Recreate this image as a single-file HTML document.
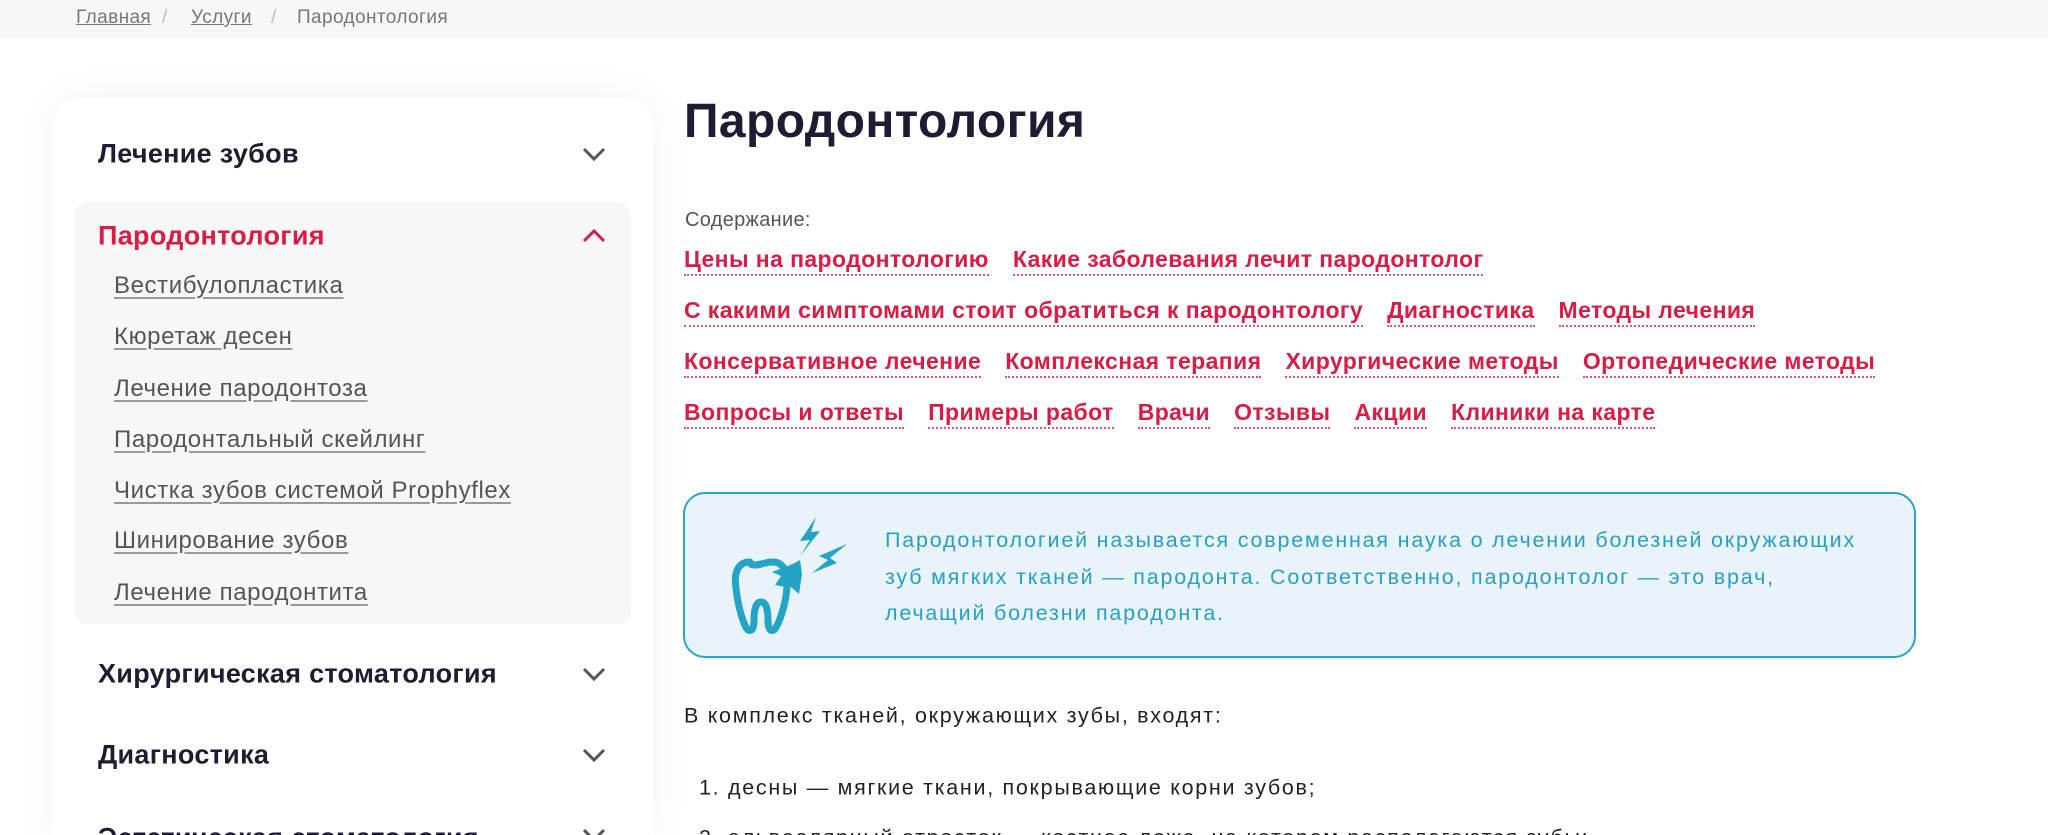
<!DOCTYPE html>
<html><head><meta charset="utf-8"><style>
*{margin:0;padding:0;box-sizing:border-box}
html,body{width:2048px;height:835px;overflow:hidden}
body{background:#fff;font-family:"Liberation Sans",sans-serif;color:#1e1b33}
#w{position:relative;width:2048px;height:835px;overflow:hidden}
.bc{position:absolute;left:0;top:0;width:2048px;height:38px;background:#f7f7f7;font-size:19px;color:#777;letter-spacing:.4px}
.bc span{position:absolute;top:7px}
.bc u{color:#777}
.card{position:absolute;left:52px;top:98px;width:601px;height:737px;background:#fff;border-radius:28px 28px 0 0;box-shadow:0 0 40px rgba(0,0,0,.06)}
.grey{position:absolute;left:74px;top:202px;width:557px;height:422px;background:#f7f7f7;border-radius:14px}
.it{position:absolute;left:98px;font-size:27px;font-weight:bold;color:#1e1b33;transform:translateY(-50%);letter-spacing:.3px}
.sub{position:absolute;left:114px;font-size:24px;letter-spacing:.6px;color:#555;text-decoration:underline;text-decoration-color:#999;text-underline-offset:4px;transform:translateY(-50%)}
.chev{position:absolute;left:582px;width:24px;height:14px}
h1{position:absolute;left:684px;top:94px;font-size:48px;font-weight:bold;color:#1e1b33;letter-spacing:.4px}
.lbl{position:absolute;left:685px;top:209px;font-size:20px;color:#555;letter-spacing:.3px}
.row{position:absolute;left:684px;display:flex;gap:24px;font-size:23px;letter-spacing:.4px;font-weight:bold;color:#d81c45;transform:translateY(-50%)}
.row span{border-bottom:2px dotted #e0567a;padding-bottom:1px;white-space:nowrap}
.box{position:absolute;left:683px;top:492px;width:1233px;height:166px;background:#e8f4fa;border:2px solid #2aa5c8;border-radius:22px}
.bt{position:absolute;left:885px;top:522px;font-size:21.5px;letter-spacing:1.8px;line-height:36.5px;color:#2a9fc4}
.p{position:absolute;left:684px;font-size:21.5px;letter-spacing:1.7px;color:#222;transform:translateY(-50%);white-space:nowrap}
</style></head><body><div id="w">
<div class="bc"><span style="left:76px"><u>Главная</u></span><span style="left:162px;color:#bbb">/</span><span style="left:191px"><u>Услуги</u></span><span style="left:271px;color:#bbb">/</span><span style="left:297px">Пародонтология</span></div>
<div class="card"></div>
<div class="grey"></div>
<div class="it" style="top:154px">Лечение зубов</div>
<svg class="chev" style="top:147px" viewBox="0 0 24 14"><path d="M2 2l10 10 10-10" fill="none" stroke="#555" stroke-width="3"/></svg>
<div class="it" style="top:236px;color:#d81c45">Пародонтология</div>
<svg class="chev" style="top:229px" viewBox="0 0 24 14"><path d="M2 12l10-10 10 10" fill="none" stroke="#d81c45" stroke-width="3"/></svg>
<div class="sub" style="top:286px">Вестибулопластика</div>
<div class="sub" style="top:337px">Кюретаж десен</div>
<div class="sub" style="top:389px">Лечение пародонтоза</div>
<div class="sub" style="top:440px">Пародонтальный скейлинг</div>
<div class="sub" style="top:491px">Чистка зубов системой Prophyflex</div>
<div class="sub" style="top:541px">Шинирование зубов</div>
<div class="sub" style="top:593px">Лечение пародонтита</div>
<div class="it" style="top:674px">Хирургическая стоматология</div>
<svg class="chev" style="top:667px" viewBox="0 0 24 14"><path d="M2 2l10 10 10-10" fill="none" stroke="#555" stroke-width="3"/></svg>
<div class="it" style="top:755px">Диагностика</div>
<svg class="chev" style="top:748px" viewBox="0 0 24 14"><path d="M2 2l10 10 10-10" fill="none" stroke="#555" stroke-width="3"/></svg>
<div class="it" style="top:838px">Эстетическая стоматология</div>
<svg class="chev" style="top:828px" viewBox="0 0 24 14"><path d="M2 2l10 10 10-10" fill="none" stroke="#555" stroke-width="3"/></svg>

<h1>Пародонтология</h1>
<div class="lbl">Содержание:</div>
<div class="row" style="top:261px"><span>Цены на пародонтологию</span><span>Какие заболевания лечит пародонтолог</span></div>
<div class="row" style="top:312px"><span>С какими симптомами стоит обратиться к пародонтологу</span><span>Диагностика</span><span>Методы лечения</span></div>
<div class="row" style="top:363px"><span>Консервативное лечение</span><span>Комплексная терапия</span><span>Хирургические методы</span><span>Ортопедические методы</span></div>
<div class="row" style="top:414px"><span>Вопросы и ответы</span><span>Примеры работ</span><span>Врачи</span><span>Отзывы</span><span>Акции</span><span>Клиники на карте</span></div>

<div class="box"></div>
<svg style="position:absolute;left:700px;top:500px" width="200" height="150" viewBox="0 0 200 150">
<path d="M50 62c-14 0-16 14-14 26 2 20 8 38 12 42 4 2 6-2 6-10 0-10 2-18 7-18s7 8 7 18c0 8 2 12 6 10 4-4 12-24 13-44 1-14-4-24-14-24-8 0-12 3-18 3s-5-3-5-3z" fill="none" stroke="#23a3c6" stroke-width="7" stroke-linejoin="round"/>
<path d="M100 60c-6 4-18 8-28 12l9 4-6 9 10 2-3 12 9-12 8 7 3-20z" fill="#23a3c6"/>
<path d="M116 17l-16 24 10-1-10 16 20-25-9 1z" fill="#23a3c6"/>
<path d="M147 44l-28 12 9 4-16 13 25-10-7-5z" fill="#23a3c6"/>
</svg>
<div class="bt">Пародонтологией называется современная наука о лечении болезней окружающих<br>зуб мягких тканей — пародонта. Соответственно, пародонтолог — это врач,<br>лечащий болезни пародонта.</div>
<div class="p" style="top:716px">В комплекс тканей, окружающих зубы, входят:</div>
<div class="p" style="top:788px;left:699px">1. десны — мягкие ткани, покрывающие корни зубов;</div>
<div class="p" style="top:838px;left:699px">2. альвеолярный отросток — костное ложе, на котором располагаются зубы;</div>
</div></body></html>
